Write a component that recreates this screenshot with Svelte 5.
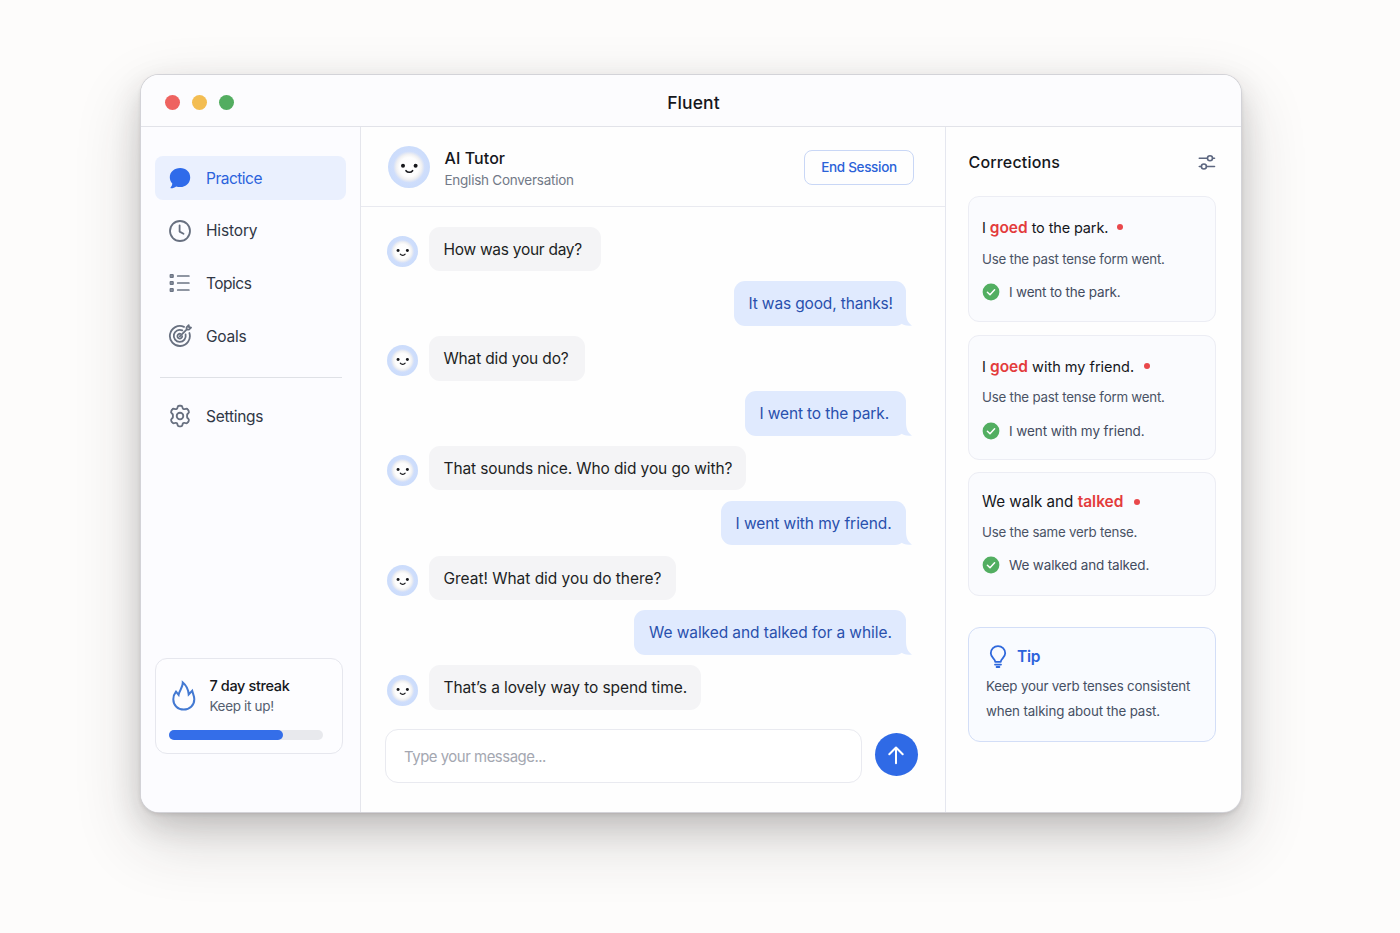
<script>
  const messages = [
    { me: false, text: 'How was your day?', ls: -0.28, width: 171.5 },
    { me: true, text: 'It was good, thanks!', ls: -0.15, width: 172.5 },
    { me: false, text: 'What did you do?', ls: -0.16, width: 156 },
    { me: true, text: 'I went to the park.', ls: -0.14, width: 161.5 },
    { me: false, text: 'That sounds nice. Who did you go with?', ls: -0.11, width: 317 },
    { me: true, text: 'I went with my friend.', ls: -0.07, width: 185.5 },
    { me: false, text: 'Great! What did you do there?', ls: -0.03, width: 247 },
    { me: true, text: 'We walked and talked for a while.', ls: -0.07, width: 272 },
    { me: false, text: 'That’s a lovely way to spend time.', ls: -0.1, width: 272 }
  ];
  const corrections = [
    { before: 'I ', wrong: 'goed', after: ' to the park.', why: 'Use the past tense form went.', right: 'I went to the park.' },
    { before: 'I ', wrong: 'goed', after: ' with my friend.', why: 'Use the past tense form went.', right: 'I went with my friend.' },
    { before: 'We walk and ', wrong: 'talked', after: '', why: 'Use the same verb tense.', right: 'We walked and talked.' }
  ];
  const streak = 74;
</script>

{#snippet face(size)}
  <svg class="face" width={size} height={size} viewBox="0 0 42 42">
    <defs>
      <radialGradient id="glow{size}">
        <stop offset="0" stop-color="#fff" />
        <stop offset=".46" stop-color="#fdfdfd" />
        <stop offset=".60" stop-color="#f1f1f2" />
        <stop offset=".69" stop-color="#dde5f6" />
        <stop offset=".75" stop-color="#cfdefc" />
        <stop offset="1" stop-color="#cbdcfb" />
      </radialGradient>
    </defs>
    <circle cx="21" cy="21" r="21" fill="url(#glow{size})" />
    <circle cx="15" cy="19.7" r="2" fill="#17181c" />
    <circle cx="27.6" cy="19.7" r="2" fill="#17181c" />
    <path d="M18 24.700c1.600 2.100 5 2.100 6.600 0" fill="none" stroke="#17181c" stroke-width="1.600" stroke-linecap="round" />
  </svg>
{/snippet}

<div class="desk">
  <div class="window">
    <header class="titlebar">
      <div class="lights"><i class="red"></i><i class="yellow"></i><i class="green"></i></div>
      <h1>Fluent</h1>
    </header>
    <div class="body">
      <aside class="sidebar">
        <nav>
          <a class="item active" href="#practice">
            <svg width="24" height="24" viewBox="0 0 24 24"><path d="M12.200 2C6.300 2 1.800 6 1.800 11.300c0 2.500.9 4.600 2.500 6.200-.1 1.500-.7 2.900-1.700 4-.3.400 0 .8.500.8 2-.1 3.700-.8 5-1.900 1.300.4 2.700.6 4.100.6 5.800 0 10-4.100 10-9.600S18 2 12.200 2Z" fill="#2f6bea" /></svg>
            <span>Practice</span>
          </a>
          <a class="item history" href="#history">
            <svg width="24" height="24" viewBox="0 0 24 24" fill="none" stroke="#687080" stroke-width="1.800" stroke-linecap="round" stroke-linejoin="round"><circle cx="12" cy="12" r="10" /><path d="M11.600 6.300v6.300l3.900 2.200" /></svg>
            <span>History</span>
          </a>
          <a class="item topics" href="#topics">
            <svg width="24" height="24" viewBox="0 0 24 24" fill="none" stroke="#6b7484" stroke-width="1.700" stroke-linecap="round"><path d="M9.700 5H20.900M9.700 12H20.900M9.700 19H20.900" /><g fill="#858c9a" stroke-width="1.200"><rect x="2.200" y="3.500" width="3" height="3" rx=".5" /><rect x="2.200" y="10.500" width="3" height="3" rx=".5" /><rect x="2.200" y="17.500" width="3" height="3" rx=".5" /></g></svg>
            <span>Topics</span>
          </a>
          <a class="item" href="#goals">
            <svg width="24" height="24" viewBox="0 0 24 24" fill="none" stroke="#687080" stroke-width="1.800" stroke-linecap="round" stroke-linejoin="round"><path d="M16 2.900A10 10 0 1 0 21.400 9" /><path d="M14.300 6.400A6 6 0 1 0 17.600 10.500" /><path d="M12.300 9.800A2.400 2.400 0 1 0 14.200 12.200" /><path d="M11.800 12.300 18.800 5.300M18.600 5.400V3.300L20.700 1.200l.4 2 1.900.5-2.100 2-2.300-.3" /></svg>
            <span>Goals</span>
          </a>
          <hr />
          <a class="item" href="#settings">
            <svg width="24" height="24" viewBox="0 0 24 24" fill="none" stroke="#687080" stroke-width="1.850" stroke-linejoin="round"><circle cx="12" cy="12" r="3.300" /><path d="M9.600 3Q9.900 1.700 11.100 1.700h1.800q1.200 0 1.500 1.300l.3 1.100q.2.600.7.900.6.300 1.200.1l1.300-.3q1.300-.3 1.900.8l.9 1.500q.6 1.100-.3 2l-.9.900q-.4.400-.4 1v2q0 .6.400 1l.9.900q.9.900.3 2l-.9 1.500q-.6 1.100-1.900.8l-1.300-.3q-.6-.2-1.200.1-.5.300-.7.900l-.3 1.100q-.3 1.300-1.500 1.300h-1.800q-1.200 0-1.500-1.300l-.3-1.100q-.2-.6-.7-.9-.6-.3-1.200-.1l-1.300.3q-1.300.3-1.900-.8l-.9-1.500q-.6-1.100.3-2l.9-.9q.4-.4.400-1v-2q0-.6-.4-1l-.9-.9q-.9-.9-.3-2l.9-1.500q.6-1.100 1.900-.8l1.300.3q.6.200 1.200-.1.500-.3.700-.9Z" /></svg>
            <span>Settings</span>
          </a>
        </nav>
        <section class="streak">
          <div class="streak-top">
            <svg width="26" height="32" viewBox="0 0 26 32" fill="none" stroke="#4379d2" stroke-width="2" stroke-linejoin="miter"><path d="M11.800 2.500C12 7.500 8.300 10.500 7.600 14.800L5 11.600C3.100 14 2.300 16.500 2.300 19.300 2.300 25.400 6.900 29.600 12.700 29.600S23.300 25.400 23.300 19.300C23.300 16.200 21.800 13.300 21.200 10.800L17.700 14.400C17.300 9 15.500 5.600 11.800 2.500Z" /></svg>
            <div><strong>7 day streak</strong><small>Keep it up!</small></div>
          </div>
          <div class="track"><div class="fill" style="width:{streak}%"></div></div>
        </section>
      </aside>

      <main class="chat">
        <header class="chat-head">
          {@render face(42)}
          <div class="who"><h2>AI Tutor</h2><p>English Conversation</p></div>
          <button class="end">End Session</button>
        </header>
        <div class="messages">
          {#each messages as m}
            <div class="row" class:me={m.me}>
              {#if !m.me}{@render face(31)}{/if}
              <div class="bubble" style="width:{m.width}px">
                <span style="letter-spacing:{m.ls}px">{m.text}</span>
                {#if m.me}<svg class="tail" width="12" height="14" viewBox="0 0 12 14"><path d="M6 0C6 7 8 11 12 13.400 7 14.200 3.500 13.300 0 10.500Z" fill="#e0eafe" /></svg>{/if}
              </div>
            </div>
          {/each}
        </div>
        <div class="composer">
          <input type="text" placeholder="Type your message..." />
          <button class="send" aria-label="Send"><svg width="22" height="22" viewBox="0 0 22 22" fill="none" stroke="#fff" stroke-width="2" stroke-linecap="round" stroke-linejoin="round"><path d="M11 19.300V3.800M4.300 10.200 11 3.500l6.700 6.700" /></svg></button>
        </div>
      </main>

      <aside class="side">
        <div class="side-head">
          <h2>Corrections</h2>
          <svg width="18" height="18" viewBox="0 0 18 18" fill="none" stroke="#5d6780" stroke-width="1.600" stroke-linecap="round"><path d="M1.300 5.300H9.300M14.600 5.300H16.500M1.300 13.500H3.300M8.600 13.500H16.500" /><circle cx="12" cy="5.300" r="2.500" /><circle cx="5.900" cy="13.500" r="2.500" /></svg>
        </div>
        {#each corrections as c, i}
          <section class="card c{i}">
            <p class="said"><span>{c.before}<b>{c.wrong}</b>{c.after}</span><i></i></p>
            <p class="why">{c.why}</p>
            <p class="right"><svg width="18" height="18" viewBox="0 0 18 18"><circle cx="9" cy="9" r="8.400" fill="#52ae61" /><path d="M5.400 9.200 8 11.700 12.600 6.700" fill="none" stroke="#fff" stroke-width="1.500" stroke-linecap="round" stroke-linejoin="round" /></svg><span>{c.right}</span></p>
          </section>
        {/each}
        <section class="tip">
          <h3><svg width="18" height="24" viewBox="0 0 18 24" fill="none" stroke="#2f68dc" stroke-width="1.800" stroke-linecap="round" stroke-linejoin="round"><path d="M6.200 16.800C6.200 14 1.800 12.500 1.800 8.300a7.200 7.200 0 0 1 14.400 0c0 4.200-4.400 5.700-4.400 8.500Z" /><path d="M6 19.600h6M7.600 22h2.800" /></svg>Tip</h3>
          <p>Keep your verb tenses consistent<br /><span>when talking about the past.</span></p>
        </section>
      </aside>
    </div>
  </div>
</div>

<style>
  :global(body) { margin: 0; background: #fdfcfb; }
  * { box-sizing: border-box; }
  h1, h2, h3, p, hr { margin: 0; font-weight: inherit; }
  svg { display: block; flex: none; }
  button, input { font: inherit; }
  .desk { height: 933px; padding: 75px 159px 0 141px; overflow: hidden; font-family: Inter, "Liberation Sans", sans-serif; background: #fdfcfb; color: #15171c; }
  .window { height: 737px; border-radius: 18px; background: #fefefe; display: flex; flex-direction: column; overflow: hidden; box-shadow: 0 0 0 1px #d3d3d8, 0 2px 4px rgba(40, 36, 36, .14), 0 12px 30px rgba(40, 36, 36, .17), 0 26px 66px rgba(40, 36, 36, .19); }
  .titlebar { height: 52px; flex: none; border-bottom: 1px solid #e2e3e9; background: #fcfcfe; display: grid; grid-template-columns: 1fr auto 1fr; align-items: center; padding: 3px 0 0 24px; }
  .lights { display: flex; gap: 12px; }
  .lights i { width: 15px; height: 15px; border-radius: 50%; }
  .red { background: #ee6360; }
  .yellow { background: #f3bd52; }
  .green { background: #53ad60; }
  h1 { font-size: 17.500px; font-weight: 550; letter-spacing: 0.100px; margin-right: 19px; }
  .body { flex: 1; display: grid; grid-template-columns: 220px 585px 1fr; min-height: 0; }
  .sidebar { border-right: 1px solid #e5e6ec; background: #fcfcff; padding: 29px 14px 58px; display: flex; flex-direction: column; justify-content: space-between; }
  nav { display: flex; flex-direction: column; gap: 9px; }
  .item { display: flex; align-items: center; gap: 14.500px; height: 43.800px; width: 191px; padding-left: 12.500px; border-radius: 8px; color: #303745; text-decoration: none; font-size: 15.500px; letter-spacing: -0.260px; }
  .item.active { background: #eaf0fe; color: #2b62dc; letter-spacing: -0.500px; }
  .item.active span { padding-top: 1px; }
  .item.history { letter-spacing: -0.150px; }
  .item.topics { letter-spacing: -0.500px; }
  hr { border: 0; height: 1px; background: #dfe1e6; width: 182px; margin: 10px 0 7px 5px; }
  .streak { width: 188px; height: 96px; border: 1px solid #e6e7ee; border-radius: 12px; padding: 16px 19px 0 13px; background: #fdfdff; margin-left: 0.400px; }
  .streak-top { display: flex; gap: 12px; align-items: center; padding-left: 2px; height: 41px; }
  .streak-top div { display: flex; flex-direction: column; }
  strong { font-size: 14.500px; line-height: 20px; font-weight: 450; letter-spacing: -0.360px; }
  small { font-size: 13.500px; line-height: 20px; color: #555f70; letter-spacing: -0.330px; }
  .track { height: 10px; border-radius: 5px; background: #e8e9ed; margin-top: 14px; }
  .fill { height: 10px; border-radius: 5px; background: #346ee9; }
  .chat { border-right: 1px solid #e5e7ef; display: flex; flex-direction: column; }
  .chat-head { height: 79.500px; flex: none; border-bottom: 1px solid #e9eaf0; display: flex; align-items: center; padding: 2px 31px 0 27px; }
  .who { margin-left: 14.500px; padding-top: 1.500px; flex: 1; }
  .who h2 { font-size: 16px; font-weight: 550; line-height: 22px; letter-spacing: 0.080px; }
  .who p { font-size: 13.500px; line-height: 20px; color: #727987; margin-top: 1px; letter-spacing: -0.250px; }
  .end { width: 110px; height: 35.500px; padding: 0 0 1px; border: 1.500px solid #c9d7f6; border-radius: 8px; background: #fefefe; color: #2b62d8; font-size: 13.500px; font-weight: 500; letter-spacing: -0.320px; }
  .messages { display: flex; flex-direction: column; gap: 10.350px; padding: 20px 39px 0 25.500px; }
  .row { display: flex; align-items: center; height: 44.500px; }
  .row.me { justify-content: flex-end; }
  .row .face { margin: 5px 11.500px 0 0; }
  .bubble { position: relative; height: 44.500px; line-height: 45.600px; padding: 0 0 0 14.500px; border-radius: 11px; background: #f4f4f6; font-size: 15.500px; white-space: nowrap; color: #1d1f24; }
  .me .bubble { background: #e0eafe; color: #2950ad; padding-left: 15px; }
  .tail { position: absolute; right: -6px; bottom: 0; }
  .composer { display: flex; align-items: center; gap: 12.500px; padding: 19.500px 0 0 24px; }
  input { width: 477px; height: 54px; border: 1.500px solid #e9eaf0; border-radius: 13px; padding: 1px 18px 0; background: #fff; font-size: 14.900px; letter-spacing: -0.460px; outline: none; }
  input::placeholder { color: #a4a7b1; opacity: 1; }
  .send { width: 43px; height: 43px; border: 0; border-radius: 50%; background: #2f6ae6; display: grid; place-items: center; padding: 0; margin-top: -3px; }
  .side { padding: 24px 25px 0 22px; }
  .side-head { height: 22px; display: flex; align-items: center; justify-content: space-between; margin-bottom: 23px; }
  .side-head h2 { font-size: 16px; font-weight: 550; letter-spacing: 0.170px; padding-left: 0.500px; }
  .card { height: 126px; width: 248px; border: 1px solid #ecedf4; border-radius: 11px; background: #fafbfe; padding: 19px 13px 0; margin-bottom: 13px; }
  .c1 { height: 125px; margin-bottom: 12px; }
  .c2 { height: 124px; padding-top: 17.500px; }
  .card p { display: flex; align-items: center; white-space: nowrap; }
  .said { font-size: 14.500px; height: 22px; gap: 9px; letter-spacing: -0.130px; }
  .c1 .said { letter-spacing: 0; gap: 9.500px; }
  .c2 .said { font-size: 15.200px; letter-spacing: 0; gap: 11px; }
  .said span { white-space: pre; }
  .said b { font-size: 15.500px; font-weight: 600; color: #e33b3c; letter-spacing: 0; }
  .said i { width: 6px; height: 6px; border-radius: 50%; background: #e9484b; }
  .why { font-size: 13.300px; color: #4a5365; height: 22px; margin-top: 9.500px; letter-spacing: -0.210px; }
  .c2 .why, .c1 .why { margin-top: 8.500px; }
  .right { font-size: 13.500px; color: #434c60; height: 22px; margin-top: 11.500px; gap: 9px; letter-spacing: -0.190px; }
  .c1 .right { letter-spacing: -0.080px; margin-top: 12px; }
  .c2 .right { letter-spacing: -0.150px; margin-top: 11px; }
  .tip { width: 248px; height: 115px; margin-top: 30.500px; border: 1.500px solid #d3def7; border-radius: 12px; background: #f9fbff; padding: 16px 17px 0; }
  .tip h3 { display: flex; align-items: center; gap: 10px; font-size: 15.500px; font-weight: 600; color: #2b62dc; height: 26px; padding-left: 3px; letter-spacing: -0.250px; }
  .tip p { font-size: 13.300px; line-height: 24.800px; color: #465064; margin-top: 4.300px; white-space: nowrap; letter-spacing: -0.180px; }
  .tip p span { letter-spacing: -0.130px; }
</style>
